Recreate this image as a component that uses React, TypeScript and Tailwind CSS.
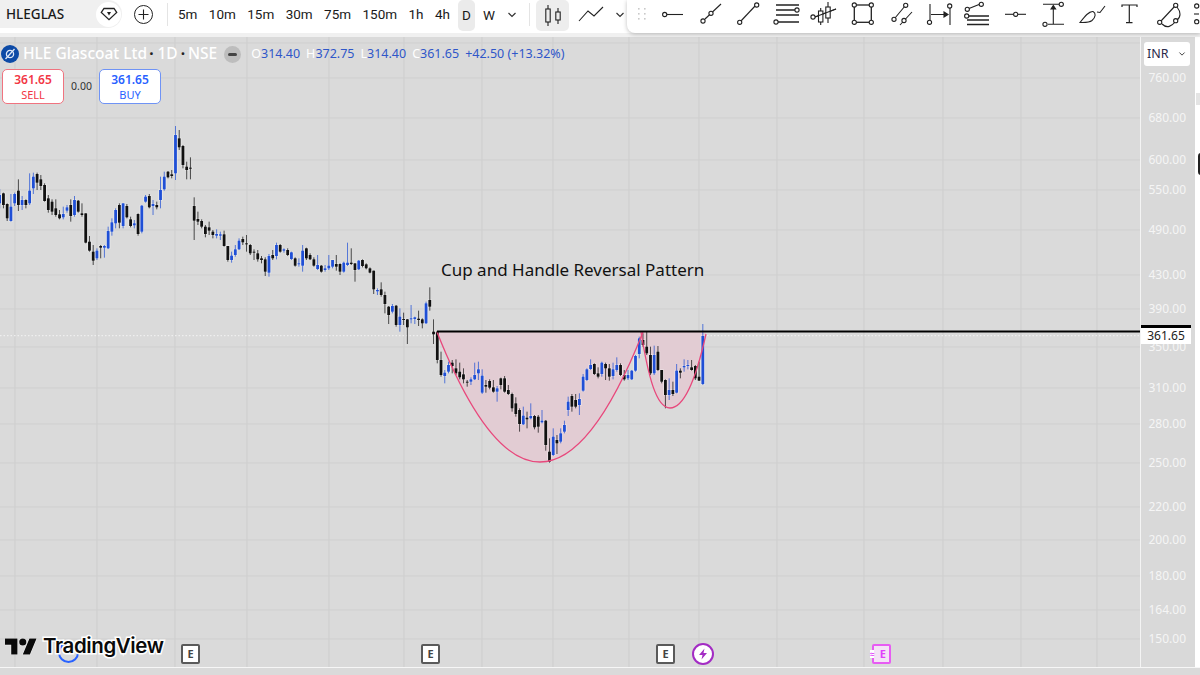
import React from "react";

type C = [number, number, number, number, number];
// wick top, body top, body bottom, wick bottom, blue flag (zoomed-crop units)
const A: C[] = [
[207,225,250,265,1],[218,220,255,265,0],[250,252,295,303,0],[222,260,303,305,1],[218,222,250,258,1],[178,212,255,273,0],[228,240,255,270,1],[238,240,255,265,0],[160,212,250,255,1],[158,170,205,222,1],
[158,162,188,210,0],[165,178,198,210,0],[190,195,243,245,0],[225,235,270,278,0],[238,245,275,285,0],[238,265,285,290,0],[270,283,295,298,0],[260,282,292,298,1],[255,262,272,278,1],[238,255,288,305,0],
[228,240,285,290,1],[240,242,275,278,0],[250,280,285,290,0],[280,280,368,370,0],[348,365,392,395,0],[375,395,422,435,0],[385,392,415,420,1],[375,378,383,415,0],[375,378,383,413,1],[320,333,385,387,1],
[295,307,335,347,1],[265,270,310,325,1],[250,255,308,325,0],[250,250,318,325,1],[252,258,292,295,0],[290,298,318,322,0],[300,310,316,325,1],[280,282,342,347,0],[255,257,335,340,1],[225,230,245,248,1],
[222,228,262,265,0],[240,252,258,285,1],[245,255,262,268,0],[170,210,240,265,1],[155,170,208,212,1],[153,155,172,175,0],[150,163,168,175,0],[18,45,160,180,1],[30,55,82,90,0],[75,78,135,145,0],
[125,140,150,178,0],[112,143,146,178,0],[232,258,302,360,0],[275,297,305,315,0],[298,303,320,325,0],[315,320,342,352,0],[305,322,332,345,0],[330,335,345,355,0],[328,342,347,355,1],[335,343,347,360,1],
[332,343,378,380,0],[378,378,420,425,0],[395,407,420,428,1],[375,388,405,410,1],[355,362,388,390,1],[350,357,367,375,0],[345,370,372,395,0],[372,375,400,405,0],[388,395,398,420,0],[390,400,418,425,0],
[408,415,420,430,0],[412,418,455,468,0],[402,408,458,470,1],[390,405,415,420,0],[368,375,408,418,1],[372,375,395,398,0],[385,388,392,398,1],[385,390,405,408,0],[395,397,417,420,1],[412,415,437,440,0],
[415,430,433,440,1],[375,392,437,455,1],[383,385,415,420,0],[400,405,418,420,0],[412,418,437,440,0],[405,435,447,450,1],[435,437,455,458,0],[435,445,450,455,1],[405,437,445,450,1],[420,420,440,445,1],
[405,432,440,452,0],[430,432,455,465,0],[425,428,455,458,1],[368,428,435,438,1],[385,428,432,435,0],[430,430,450,485,0],[420,422,448,450,1],[418,420,438,442,0],[430,433,445,448,0],[442,445,458,460,0],
[452,452,508,522,0],[505,510,514,525,1],[487,508,525,530,0],[515,525,552,580,0],[558,560,585,612,0],[552,558,575,580,1],[555,557,615,620,0],[565,590,615,635,1],[578,597,600,615,0],[597,598,622,672,0],
[555,595,598,610,1],[590,592,597,612,1],[572,596,600,618,0],
];
const B: C[] = [
[115,118,130,145,0],[65,70,130,132,1],[22,60,80,92,0],[118,155,163,192,0],[155,155,240,250,0],[215,240,285,290,0],[270,278,288,310,1],[245,255,275,280,1],[240,248,258,280,0],[238,265,280,285,0],
[248,275,292,298,0],[265,283,298,310,0],[300,305,308,320,0],[292,298,305,315,1],[248,285,298,300,1],[245,268,280,300,1],[268,287,338,342,1],[300,315,320,338,0],[298,303,323,328,0],[300,322,335,338,0],
[318,325,335,365,1],[293,295,315,328,0],[288,295,335,338,0],[315,330,342,345,0],[338,342,385,395,0],[352,370,402,410,0],[385,390,432,455,0],[380,407,433,435,1],[395,413,418,445,0],[370,408,415,418,1],
[405,408,442,448,0],[405,410,440,458,0],[390,422,427,430,1],[420,422,495,512,0],[475,515,545,548,0],[445,470,525,528,1],[465,480,490,522,0],[445,460,485,490,1],[422,435,455,460,1],[350,365,390,408,1],
[342,348,380,395,0],[342,360,380,385,0],[340,357,375,405,1],[282,290,332,335,1],[265,268,300,303,1],[238,255,267,270,1],[250,252,282,285,0],[262,280,290,295,0],[245,248,282,290,1],[248,252,265,300,0],
[252,265,290,302,0],[248,268,288,298,1],[232,255,270,275,1],[250,255,285,288,0],[270,285,298,302,0],[270,285,295,300,1],[270,272,298,300,1],[225,228,272,275,1],[170,175,222,235,1],[160,180,195,200,0],
[155,200,220,225,0],[200,225,280,285,0],[197,225,280,285,1],[198,215,270,273,0],[270,270,305,310,0],[298,300,345,385,0],[295,330,345,360,1],[305,330,342,348,0],[252,272,338,340,1],[265,272,278,295,0],
[238,258,262,275,1],[240,255,258,268,1],[240,262,270,272,0],[255,258,295,300,0],[245,290,302,303,0],[132,168,312,315,1],
];
const candles = [
  ...A.map((c, i) => ({ c, i, base: 120 })),
  ...B.map((c, i) => ({ c, i: i + A.length, base: 280 })),
];

const vGrid = [15, 97, 175, 247, 329, 404, 482, 553, 629, 699, 777, 864, 943, 1021, 1097];
const axis: [string, number][] = [
  ["760.00", 78], ["680.00", 118], ["600.00", 160], ["550.00", 190], ["490.00", 230], ["430.00", 275], ["390.00", 309],
  ["350.00", 347], ["310.00", 388], ["280.00", 424], ["250.00", 463], ["220.00", 507], ["200.00", 540], ["180.00", 576],
  ["164.00", 610], ["150.00", 639],
];
const intervals = ["5m", "10m", "15m", "30m", "75m", "150m", "1h", "4h"];

function Dot({ x, y }: { x: number; y: number }) {
  return <circle cx={x} cy={y} r={2.1} fill="white" stroke="#222" strokeWidth={1.1} />;
}

function Tool({ x0, children }: { x0: number; children: React.ReactNode }) {
  return (
    <svg width={38} height={33} viewBox={`${x0} 0 38 33`} className="shrink-0" fill="none" stroke="#222" strokeWidth={1.1}>
      {children}
    </svg>
  );
}

function Tools() {
  return (
    <div className="flex">
      <Tool x0={656}><path d="M667 14.5H684" /><Dot x={665.7} y={14.5} /></Tool>
      <Tool x0={694}><path d="M706 19L722 4" /><Dot x={704} y={21} /><Dot x={712} y={13.3} /></Tool>
      <Tool x0={732}><path d="M741 22L757 5" /><Dot x={740.7} y={22.3} /><Dot x={757.7} y={5} /></Tool>
      <Tool x0={770}>
        <path d="M777 5H800M777 10H796M777 15H800M779 22H800" strokeWidth={1.3} />
        <Dot x={798} y={10} /><Dot x={777} y={22} />
      </Tool>
      <Tool x0={808}>
        <path d="M821.7 8V25M829 2V23M816 17L837 9" />
        <rect x={819.5} y={11} width={4.4} height={11} fill="white" />
        <rect x={826.8} y={7} width={4.4} height={11} fill="white" />
        <path d="M816 17L837 9" />
        <Dot x={814} y={17} />
      </Tool>
      <Tool x0={846}>
        <rect x={855.3} y={5} width={17} height={17.3} strokeWidth={1.3} />
        <Dot x={855.3} y={5} /><Dot x={872.3} y={5} /><Dot x={855.3} y={22.3} /><Dot x={872.3} y={22.3} />
      </Tool>
      <Tool x0={884}>
        <path d="M896 18L906 6M901 25L913 12" />
        <Dot x={895} y={19.3} /><Dot x={906.7} y={5.3} /><Dot x={905} y={20.5} />
      </Tool>
      <Tool x0={922}>
        <path d="M931 4V21M951 7V25M932 14.5H948" />
        <path d="M945 12L949 14.5L945 17Z" fill="#222" />
        <Dot x={930.5} y={22.3} /><Dot x={950.7} y={6} />
      </Tool>
      <Tool x0={960}>
        <path d="M970 8.5L980 4.5M969 16H990M968 20H990M968 24.5H990" strokeWidth={1.3} />
        <Dot x={968.3} y={9.3} /><Dot x={982.3} y={4.3} /><Dot x={967.7} y={16} />
      </Tool>
      <Tool x0={998}><path d="M1006 14.3H1027" /><Dot x={1016.7} y={14.3} /></Tool>
      <Tool x0={1036}>
        <path d="M1044 4.3H1060M1049 24.3H1065M1054.3 7V24" />
        <path d="M1052 9L1054.3 5.5L1056.6 9Z" fill="#222" />
        <Dot x={1062.3} y={4.3} /><Dot x={1046} y={24.3} />
      </Tool>
      <Tool x0={1074}>
        <path d="M1081 22.5C1084 22.5 1090 23 1093 20.5C1097 17 1097 13 1094 11.5C1090 11 1086 16 1081 22.5Z" />
        <path d="M1098 12L1101 12.5L1106 6" />
      </Tool>
      <Tool x0={1112}>
        <path d="M1123 7V5H1138V7M1130.3 5V22.7M1127 22.7H1133.5" strokeWidth={1.2} />
      </Tool>
      <Tool x0={1150}>
        <path d="M1176 6L1162 21M1163 24C1168 29 1173 26 1176 22M1178 7C1182 12 1182 17 1178 20" />
        <Dot x={1176.7} y={5.3} /><Dot x={1160.7} y={22.3} /><Dot x={1176.7} y={20.7} />
      </Tool>
      <Tool x0={1188}>
        <path d="M1195 14H1200" /><Dot x={1197.7} y={6} /><Dot x={1197.7} y={21.7} />
      </Tool>
    </div>
  );
}

function Chevron({ className }: { className: string }) {
  return (
    <svg width={10} height={6} viewBox="0 0 10 6" className={className} fill="none" stroke="#333" strokeWidth={1.2}>
      <path d="M1.5 1L5 4.5L8.5 1" />
    </svg>
  );
}

function Header() {
  return (
    <div className="flex h-[33px] bg-white text-[13.5px] text-[#1a1a1a] [font-family:Roboto,sans-serif]">
      <div className="flex h-[28px] w-[122px] shrink-0 items-center justify-between rounded-r-[14px] bg-[#f0f0f0] pl-[6px] pr-[1px]">
        <span className="font-medium [font-family:'Noto_Sans',sans-serif]">HLEGLAS</span>
        <span className="flex h-[25px] w-[25px] items-center justify-center rounded-full bg-white">
          <svg width={18} height={14} viewBox="0 0 18 14" fill="none" stroke="#222" strokeWidth={1.3}>
            <path d="M4 1.5H14L16.7 5.5L9 12.7L1.3 5.5Z" />
            <path d="M7 5H11L9 8.5Z" fill="#222" stroke="none" />
          </svg>
        </span>
      </div>
      <span className="ml-[12px] mt-[5px] flex h-[19px] w-[19px] shrink-0 items-center justify-center rounded-full border border-[#222]">
        <svg width={11} height={11} viewBox="0 0 11 11" stroke="#222" strokeWidth={1.1}><path d="M5.5 0.5V10.5M0.5 5.5H10.5" /></svg>
      </span>
      <span className="ml-[14px] mt-[3px] h-[23px] w-px shrink-0 bg-[#e4e4e4]" />
      <div className="ml-[10px] flex h-[28px] w-[272px] shrink-0 items-center justify-between">
        {intervals.map((t) => (
          <span key={t}>{t}</span>
        ))}
      </div>
      <span className="ml-[8px] flex h-[31px] w-[17px] shrink-0 items-center justify-center rounded-[5px] bg-[#ebebeb]">D</span>
      <span className="ml-[8px] mt-[5px] w-[13px] shrink-0">W</span>
      <Chevron className="ml-[11px] mt-[12px] shrink-0" />
      <span className="ml-[12px] mt-[3px] h-[23px] w-px shrink-0 bg-[#e4e4e4]" />
      <span className="ml-[6px] flex h-[31px] w-[33px] shrink-0 items-center justify-center rounded-[5px] bg-[#ededed]">
        <svg width={18} height={22} viewBox="0 0 18 22" fill="none" stroke="#222" strokeWidth={1.1}>
          <path d="M4 0V21M14 3V19" />
          <rect x={1.8} y={4} width={4.4} height={13} fill="#ededed" />
          <rect x={11.8} y={7} width={4.4} height={8} fill="#ededed" />
        </svg>
      </span>
      <svg width={26} height={18} viewBox="0 0 26 18" className="ml-[9px] mt-[5px] shrink-0" fill="none" stroke="#222" strokeWidth={1.1}>
        <path d="M1 16L10 6L16 11L25 2" />
      </svg>
      <Chevron className="ml-[11px] mt-[12px] shrink-0" />
      <div className="relative z-10 ml-[2px] flex h-[33px] flex-1 overflow-hidden rounded-bl-[8px] bg-white shadow-[0_1px_4px_rgba(0,0,0,0.25)]">
        <svg width={28} height={33} viewBox="0 0 28 33" className="shrink-0" fill="#c9c9c9">
          {[8, 13, 18].map((y) => (
            <g key={y}>
              <rect x={11} y={y} width={1.6} height={1.6} />
              <rect x={17} y={y} width={1.6} height={1.6} />
            </g>
          ))}
        </svg>
        <Tools />
      </div>
    </div>
  );
}

function Legend() {
  return (
    <div className="absolute left-0 top-[5px] flex items-start">
      <div>
        <div className="flex h-[24px] items-center pl-[1px]">
          <span className="flex h-[18px] w-[18px] items-center justify-center rounded-full bg-[#0d4aa6]">
            <svg width={12} height={12} viewBox="0 0 12 12" fill="none" stroke="#dfe8f7" strokeWidth={1.3}>
              <circle cx={6} cy={6} r={3.6} />
              <path d="M10.5 1L1.5 11" />
            </svg>
          </span>
          <span className="ml-[4px] text-[15.5px] font-medium text-white">HLE Glascoat Ltd</span>
          <span className="ml-[2px] text-[15.5px] font-bold text-[#222]">·</span>
          <span className="ml-[4px] text-[15.5px] font-medium text-white">1D</span>
          <span className="ml-[3px] text-[15.5px] font-bold text-[#222]">·</span>
          <span className="ml-[3px] text-[15.5px] font-medium text-white">NSE</span>
          <span className="ml-[7px] flex h-[17px] w-[17px] items-center justify-center rounded-full bg-[#bdbdbd]">
            <span className="h-[3px] w-[9px] rounded-sm bg-[#444]" />
          </span>
          <span className="ml-[10px] flex gap-[6px] text-[12.5px] text-[#2f57c9]">
            <span><b className="font-normal text-white">O</b>314.40</span>
            <span><b className="font-normal text-white">H</b>372.75</span>
            <span><b className="font-normal text-white">L</b>314.40</span>
            <span><b className="font-normal text-white">C</b>361.65</span>
            <span>+42.50 (+13.32%)</span>
          </span>
        </div>
        <div className="mt-[3px] flex items-center pl-[2px]">
          <div className="flex h-[35px] w-[62px] flex-col items-center justify-center rounded-[5px] border border-[#f0737f] bg-white text-[#f23645]">
            <span className="text-[12px] leading-[16px] font-semibold">361.65</span>
            <span className="text-[11px] leading-[14px]">SELL</span>
          </div>
          <span className="w-[35px] text-center text-[10.5px] text-[#333]">0.00</span>
          <div className="flex h-[35px] w-[62px] flex-col items-center justify-center rounded-[5px] border border-[#6f93f5] bg-white text-[#2962ff]">
            <span className="text-[12px] leading-[16px] font-semibold">361.65</span>
            <span className="text-[11px] leading-[14px]">BUY</span>
          </div>
        </div>
      </div>
    </div>
  );
}

function Chart() {
  return (
    <svg width={1140} height={630} viewBox="0 37 1140 630" className="block">
      {vGrid.map((x) => (
        <line key={x} x1={x} x2={x} y1={37} y2={667} stroke="#cdcdcd" strokeWidth={1} />
      ))}
      {[43, ...axis.map((a) => a[1])].map((y) => (
        <line key={y} x1={0} x2={1140} y1={y} y2={y} stroke="#cfcfcf" strokeWidth={1} />
      ))}
      <line x1={0} x2={1140} y1={335.7} y2={335.7} stroke="#f4f4f4" strokeWidth={1} strokeDasharray="1.5 2" />
      <path d="M437 332Q540 592 643 332Z" fill="#e2ccd3" />
      <path d="M641 332C648 375 656 408 670 408C686 408 698 370 706 332Z" fill="#e2ccd3" />
      {candles.map(({ c, i, base }) => {
        const x = -0.3 + 3.74 * i;
        const y = (v: number) => base + v / 3;
        const col = c[4] ? "#1f4fd6" : "#111111";
        return (
          <g key={i}>
            <rect x={x - 2.2} y={y(c[1]) - 0.6} width={4.4} height={(c[2] - c[1]) / 3 + 1.2} fill="#ffffff" opacity={0.45} />
            <line x1={x} x2={x} y1={y(c[0])} y2={y(c[3])} stroke={col} strokeWidth={0.9} opacity={0.8} />
            <rect x={x - 1.4} y={y(c[1])} width={2.8} height={Math.max((c[2] - c[1]) / 3, 1)} fill={col} />
          </g>
        );
      })}
      <path d="M437 332Q540 592 643 332" fill="none" stroke="#e8487c" strokeWidth={1.3} />
      <path d="M641 332C648 375 656 408 670 408C686 408 698 370 706 334" fill="none" stroke="#e8487c" strokeWidth={1.3} />
      <line x1={437} x2={1140} y1={331.5} y2={331.5} stroke="#000" strokeWidth={2} />
      <text x={441} y={276} fontSize={17} fill="#111" fontFamily="'Noto Sans', sans-serif">
        Cup and Handle Reversal Pattern
      </text>
    </svg>
  );
}

function Marker({ className }: { className: string }) {
  return (
    <span className={`absolute top-[607px] flex h-[20px] w-[19px] items-center justify-center rounded-[2px] border-2 border-[#5a5a5a] bg-white text-[11px] font-bold text-[#444] ${className}`}>
      E
    </span>
  );
}

function Overlays() {
  return (
    <>
      <Legend />
      <span className="absolute left-[58px] top-[605px] h-[21px] w-[21px] rounded-full border-2 border-[#2962ff]" />
      <div className="absolute left-[5px] top-[599px] flex items-center">
        <svg width={32} height={17} viewBox="0 4 36 18" fill="#0a0a0a" stroke="white" strokeWidth={1} paintOrder="stroke">
          <path d="M14 22H7V11H0V4h14v18zM28 22h-8l7.5-18h8L28 22z" />
          <circle cx={20} cy={8} r={4} />
        </svg>
        <span className="ml-[6px] text-[20.5px] leading-[20px] font-semibold tracking-[-0.4px] text-[#0a0a0a] [font-family:Inter,sans-serif] [-webkit-text-stroke:3px_white] [paint-order:stroke_fill]">
          TradingView
        </span>
      </div>
      <Marker className="left-[181px]" />
      <Marker className="left-[421px]" />
      <Marker className="left-[656px]" />
      <span className="absolute left-[692px] top-[606px] flex h-[22px] w-[22px] items-center justify-center rounded-full border-2 border-[#a32cc4] bg-white">
        <svg width={12} height={12} viewBox="0 0 12 12" fill="#a32cc4"><path d="M7.5 0.5L2 7H5.5L4.5 11.5L10 5H6.5Z" /></svg>
      </span>
      <span className="absolute left-[872px] top-[607px] flex h-[20px] w-[19px] items-center justify-end rounded-[2px] border-2 border-[#e75cf3] bg-[#f4e3f6] pr-[3px] text-[11px] font-bold text-[#e040fb]">
        E
      </span>
      <span className="absolute left-[870px] top-[613px] bg-white text-[8px] leading-[8px] font-bold text-[#e040fb]">≈</span>
    </>
  );
}

export default function App() {
  return (
    <div className="relative h-[675px] w-[1200px] overflow-hidden bg-[#dadada] [font-family:'Noto_Sans',sans-serif]">
      <Header />
      <div className="h-[4px] bg-[#f0f0f0]" />
      <div className="flex h-[630px]">
        <div className="relative w-[1140px] shrink-0 overflow-hidden bg-[#dadada]">
          <Chart />
          <Overlays />
        </div>
        <div className="relative w-[55px] shrink-0 border-l border-[#f4f4f4] bg-[#d9d9d9]">
          {axis.map(([t, y]) => (
            <span
              key={t}
              className="absolute right-[9px] text-[12px] leading-[14px] text-[#f5f5f5]"
              style={{ top: y - 37 - 7 }}
            >
              {t}
            </span>
          ))}
          <div className="absolute left-[3px] top-[5px] flex h-[24px] w-[46px] items-center justify-between rounded-[3px] bg-white pl-[3px] pr-[3px] text-[12.5px] text-[#2a2a4a]">
            INR
            <Chevron className="scale-75" />
          </div>
          <div className="absolute left-0 top-[288px] h-[19px] w-[50px] border-t-[3px] border-black bg-white pt-[1px] text-center text-[12px] leading-[14px] text-[#222]">
            361.65
          </div>
        </div>
        <div className="relative flex-1 bg-white">
          <span className="absolute left-[1px] top-[56px] h-[12px] w-[4px] bg-[#e4e4e4]" />
          <span className="absolute left-[3px] top-[116px] h-[22px] w-[3px] rounded-l-sm bg-[#222]" />
        </div>
      </div>
      <div className="h-[8px] border-t border-[#f6f6f6] bg-[#dadada]" />
    </div>
  );
}
